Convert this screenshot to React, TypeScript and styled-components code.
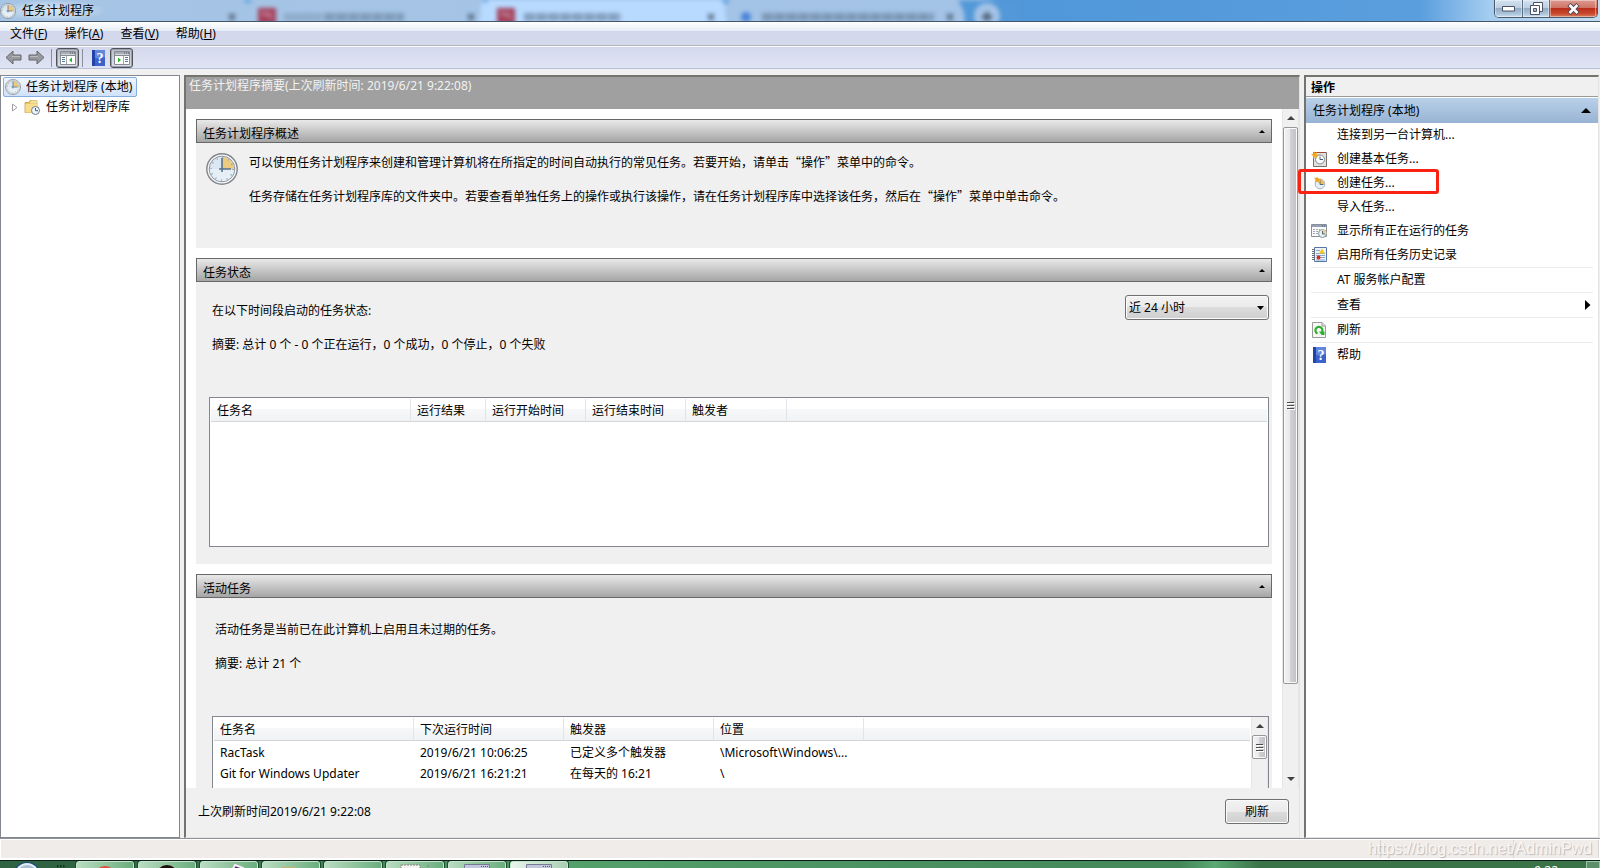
import React from "react";
import styled, { createGlobalStyle } from "styled-components";

const GlobalStyle = createGlobalStyle`
  *, *::before, *::after { box-sizing: border-box; }
  body { margin: 0; overflow: hidden; background: #f0f0f0; }
  body, button, select, table {
    font-family: "Noto Sans", "Noto Sans CJK SC", sans-serif;
    font-size: 12px;
    line-height: 16px;
    color: #000;
  }
  button { margin: 0; padding: 0; border: 0; background: none; }
  h1, h2, h3, p, ul { margin: 0; padding: 0; font-size: 12px; font-weight: 400; list-style: none; }
`;

const Screen = styled.div`
  display: flex;
  flex-direction: column;
  height: 100vh;
  overflow: hidden;
`;

/* ---------- title bar ---------- */

const TitleBar = styled.header`
  position: relative;
  display: flex;
  flex: none;
  justify-content: space-between;
  height: 22px;
  overflow: hidden;
  border-bottom: 1px solid #44546a;
  background: linear-gradient(to right, #a6c5e5 0, #a3c3e7 980px, #4f97d9 1000px, #5a9edd calc(100% - 180px), #a5cdf0 calc(100% - 110px), #c5dcf0 100%);
`;

const Backdrop = styled.svg`
  position: absolute;
  left: 0;
  top: 0;
  filter: blur(2px);
`;

const Caption = styled.div`
  position: relative;
  display: flex;
  align-items: center;
  gap: 6px;
  height: 21px;
  padding-right: 12px;
  background: radial-gradient(closest-side, rgba(255, 255, 255, 0.6), rgba(255, 255, 255, 0.3) 60%, transparent);
`;

const WindowButtons = styled.div`
  position: relative;
  display: flex;
  height: 18px;
  margin-right: 2px;
  border: 1px solid #4a5a6b;
  border-top: 0;
  border-radius: 0 0 5px 5px;
  overflow: hidden;
`;

const WindowButton = styled.button<{ $width: number; $danger?: boolean }>`
  display: flex;
  align-items: center;
  justify-content: center;
  width: ${(p) => p.$width}px;
  height: 17px;
  border-right: 1px solid ${(p) => (p.$danger ? "transparent" : "#5c6f83")};
  box-shadow: inset 0 0 0 1px rgba(255, 255, 255, 0.4);
  background: ${(p) =>
    p.$danger
      ? "linear-gradient(#dc9c92 0, #cf7466 45%, #b92f1b 50%, #c8492d 80%, #d98162 100%)"
      : "linear-gradient(#d3e2ef 0, #bcd0e2 45%, #93adc6 50%, #a9c3da 80%, #cfe2ee 100%)"};
`;

/* ---------- menu and tool bar ---------- */

const MenuBar = styled.nav`
  display: flex;
  flex: none;
  gap: 17px;
  height: 24px;
  padding-left: 10px;
  border-bottom: 1px solid #b1b3bf;
  background: linear-gradient(#fff 0, #e6edf5 9px, #d4d8ec 9px, #d4d9ed 100%);
`;

const MenuButton = styled.button`
  height: 23px;
  white-space: nowrap;
`;

const ToolBar = styled.div`
  display: flex;
  flex: none;
  align-items: center;
  height: 23px;
  padding-left: 2px;
  border-top: 1px solid #fdfdff;
  border-bottom: 1px solid #b8bfd6;
  background: linear-gradient(#d4d8ec, #dfe4f5);
`;

const ToolButton = styled.button<{ $pressed?: boolean }>`
  display: flex;
  align-items: center;
  justify-content: center;
  width: 23px;
  height: 20px;
  border-radius: 3px;
  border: ${(p) => (p.$pressed ? "1px solid #4f5358" : "0")};
  background: ${(p) => (p.$pressed ? "linear-gradient(#b9bfcd, #dde1ec)" : "none")};
  box-shadow: ${(p) => (p.$pressed ? "inset 0 0 0 1px #9aa0ad" : "none")};
`;

const ToolDivider = styled.span`
  width: 1px;
  height: 18px;
  margin: 0 4px 0 3px;
  background: #8b8f9c;
`;

/* ---------- panes ---------- */

const Workspace = styled.main`
  display: grid;
  flex: 1;
  grid-template-columns: 180px minmax(0, 1fr) 295px;
  gap: 4px;
  min-height: 0;
  padding: 6px 1px 0 0;
  border-bottom: 1px solid #8f9197;
`;

const TreePane = styled.aside`
  padding: 1px 2px;
  border: 1px solid #828790;
  background: #fff;
`;

const TreeItem = styled.button<{ $selected?: boolean; $level: number }>`
  display: flex;
  align-items: center;
  gap: ${(p) => (p.$level ? 6 : 5)}px;
  height: 20px;
  padding: 0 4px 0 ${(p) => (p.$level ? 8 : 1)}px;
  white-space: nowrap;
  border-radius: 2px;
  border: 1px solid ${(p) => (p.$selected ? "#84acdd" : "transparent")};
  background: ${(p) => (p.$selected ? "linear-gradient(#f0f6fe, #cfe2fb)" : "none")};
`;

const SummaryPane = styled.section`
  display: flex;
  flex-direction: column;
  min-height: 0;
  border: solid;
  border-width: 2px 1px 1px 2px;
  border-color: #73736f #e3e3e3 #e3e3e3 #73736f;
  background: #f0f0f0;
`;

const SummaryTitle = styled.h1`
  flex: none;
  height: 32px;
  padding: 1px 3px;
  color: #f2f2f2;
  background: #a0a0a0;
`;

const SummaryScroll = styled.div`
  display: flex;
  flex: 1;
  min-height: 0;
  overflow: hidden;
  background: #fff;
`;

const Sections = styled.div`
  display: flex;
  flex: 1;
  flex-direction: column;
  gap: 10px;
  min-width: 0;
  padding: 10px 10px 0;
`;

const Section = styled.section<{ $height: number }>`
  flex: none;
  height: ${(p) => p.$height}px;
  background: #f0f0f0;
`;

const SectionHeader = styled.div`
  display: flex;
  align-items: center;
  justify-content: space-between;
  height: 24px;
  padding: 6px 6px 0;
  border: 1px solid #686868;
  background: linear-gradient(#e9e9e9, #a5a5a5);
`;

const CollapseButton = styled.button`
  display: flex;
  align-items: center;
  height: 16px;
  padding-bottom: 6px;
`;

const Overview = styled.div`
  display: flex;
  gap: 11px;
  padding: 10px 10px;
`;

const OverviewText = styled.div`
  display: flex;
  flex-direction: column;
  gap: 18px;
  padding-top: 1px;
  font-family: "Noto Sans CJK SC", sans-serif;
`;

const Status = styled.div`
  display: flex;
  align-items: flex-start;
  justify-content: space-between;
  height: 115px;
  padding: 13px 3px 0 16px;
`;

const StatusText = styled.div`
  display: flex;
  flex-direction: column;
  gap: 18px;
  padding-top: 8px;
`;

const ActiveText = styled(StatusText)`
  height: 118px;
  padding: 24px 19px 0;
`;

const PeriodSelect = styled.select`
  appearance: none;
  width: 144px;
  height: 25px;
  padding: 0 3px;
  border: 1px solid #707070;
  border-radius: 3px;
  box-shadow: inset 0 0 0 1px #fbfbfb;
  background: linear-gradient(#f2f2f2 0, #ebebeb 50%, #dcdcdc 50%, #cfcfcf 100%);
`;

const SelectBox = styled.div`
  position: relative;
  svg { position: absolute; right: 5px; top: 11px; pointer-events: none; }
`;

const ListFrame = styled.div<{ $height: number; $left: number }>`
  display: flex;
  height: ${(p) => p.$height}px;
  margin: 0 3px 0 ${(p) => p.$left}px;
  border: 1px solid #828790;
  background: #fff;
`;

const ListBody = styled.div`
  flex: 1;
  min-width: 0;
  padding: 1px 1px 0;
`;

const List = styled.table`
  width: 100%;
  table-layout: fixed;
  border-collapse: separate;
  border-spacing: 0;
  white-space: nowrap;
  th {
    height: 23px;
    padding: 2px 0 0 6px;
    text-align: left;
    font-weight: 400;
    border-bottom: 1px solid #d5d5d5;
    border-right: 1px solid #e1e4e8;
    background: linear-gradient(#fff 0, #fff 45%, #f7f8fa 45%, #f1f2f4 100%);
  }
  th:last-child { border-right: 0; }
  td {
    height: 21px;
    padding: 2px 0 0 6px;
    overflow: hidden;
  }
`;

const Col = styled.col<{ $width?: number }>`
  width: ${(p) => (p.$width ? `${p.$width}px` : "auto")};
`;

const Footer = styled.footer`
  display: flex;
  flex: none;
  align-items: center;
  justify-content: space-between;
  height: 49px;
  padding: 0 10px 2px 12px;
`;

const RefreshButton = styled.button`
  width: 64px;
  height: 25px;
  border: 1px solid #707070;
  border-radius: 3px;
  box-shadow: inset 0 0 0 1px #fbfbfb;
  background: linear-gradient(#f2f2f2 0, #ebebeb 50%, #dcdcdc 50%, #cfcfcf 100%);
`;

/* ---------- scroll bars ---------- */

const ScrollTrack = styled.div`
  display: flex;
  flex: none;
  flex-direction: column;
  align-items: center;
  width: 17px;
  border: solid #e6e6e6;
  border-width: 0 1px;
  background: #f0f0f0;
`;

const ScrollArrow = styled.button`
  display: flex;
  flex: none;
  align-items: center;
  justify-content: center;
  width: 15px;
  height: 18px;
`;

const ScrollThumb = styled.div<{ $size: string }>`
  display: flex;
  flex: none;
  align-items: center;
  justify-content: center;
  width: 15px;
  height: ${(p) => p.$size};
  border: 1px solid #979797;
  border-radius: 2px;
  box-shadow: inset 0 0 0 1px #fafafa;
  background: linear-gradient(to right, #f3f3f3 0, #e8e8ea 45%, #d2d2d5 50%, #bfbfc4 100%);
`;

const ScrollRest = styled.div`
  flex: 1;
`;

/* ---------- actions ---------- */

const ActionsPane = styled.aside`
  position: relative;
  border: solid;
  border-width: 2px 1px 1px 2px;
  border-color: #73736f #e3e3e3 #e3e3e3 #73736f;
  background: #fff;
`;

const ActionsTitle = styled.h2`
  height: 20px;
  padding: 3px 5px 0;
  font-weight: 700;
  border-bottom: 1px solid #9a9a9a;
  background: #f0f0f0;
`;

const ActionsGroup = styled.button`
  display: flex;
  align-items: center;
  justify-content: space-between;
  width: 100%;
  height: 26px;
  padding: 0 7px;
  border-top: 1px solid #fff;
  background: linear-gradient(#b9d0e9, #98b3d3);
`;

const ActionItem = styled.li<{ $ruled?: boolean }>`
  margin: 0 5px;
  border-bottom: ${(p) => (p.$ruled ? "1px solid #ebebeb" : "0")};
`;

const ActionButton = styled.button`
  display: flex;
  align-items: center;
  width: 100%;
  height: 24px;
  padding-right: 2px;
  text-align: left;
`;

const ActionIcon = styled.span`
  display: flex;
  flex: none;
  justify-content: center;
  width: 16px;
  margin-right: 10px;
`;

const ActionLabel = styled.span`
  flex: 1;
`;

const Highlight = styled.div`
  position: absolute;
  left: -8px;
  top: 92px;
  width: 141px;
  height: 25px;
  border: 3px solid #fb2213;
  border-radius: 3px;
  pointer-events: none;
`;

/* ---------- status bar and task bar ---------- */

const StatusBar = styled.div`
  position: relative;
  display: flex;
  flex: none;
  justify-content: flex-end;
  height: 21px;
  border: solid #fff;
  border-width: 1px 1px 2px;
  background: #f0ecea;
`;

const StatusCell = styled.span<{ $width: number }>`
  width: ${(p) => p.$width}px;
  border-left: 1px solid #d9d5d3;
`;

const Watermark = styled.span`
  position: absolute;
  right: 7px;
  top: 0;
  font: 16px/18px "Liberation Sans", Arial, sans-serif;
  color: #f8f6f5;
  text-shadow: 1px 1px 1px #b9b6b5;
`;

const TaskBar = styled.footer`
  display: flex;
  flex: none;
  gap: 4px;
  height: 8px;
  overflow: hidden;
  border-top: 1px solid #0d2018;
  background: linear-gradient(to right, #2f6341 0, #2f6341 76px, #54a06b 570px, #4a9161 900px, #448759 1180px, #5aa873 1215px, #3b7349 1260px, #3b7349 100%);
`;

const StartArea = styled.div`
  display: flex;
  flex: none;
  gap: 14px;
  width: 72px;
  padding-left: 12px;
`;

const TaskButton = styled.button<{ $active?: boolean }>`
  display: flex;
  flex: none;
  justify-content: center;
  align-items: flex-start;
  width: 58px;
  height: 12px;
  border: 1px solid #c5e5cd;
  border-radius: 3px 3px 0 0;
  box-shadow: 0 0 0 1px #1d4a2e;
  background: ${(p) =>
    p.$active
      ? "linear-gradient(to right, #eaf5ec, #a9cfb3)"
      : "linear-gradient(to right, #b9dcc1, #6aae7d)"};
`;

const Tray = styled.div`
  display: flex;
  flex: 1;
  justify-content: flex-end;
  gap: 28px;
  color: #fff;
  time { padding-top: 2px; }
`;

const ShowDesktop = styled.button`
  width: 14px;
  height: 12px;
  border: 1px solid #9cc4a7;
  background: #5d8f6c;
`;

/* ---------- drawings ---------- */

const Clock = ({ size }: { size: number }) => (
  <svg width={size} height={size} viewBox="0 0 32 32" aria-hidden="true">
    <circle cx="16" cy="16" r="15.2" fill="#f5f5f5" stroke="#80858a" strokeWidth="1.4" />
    <circle cx="16" cy="16" r="12.8" fill="#dbe8f3" stroke="#8e969f" strokeWidth="1" />
    <path d="M4 16a12 12 0 0 0 24 0Z" fill="#e6eff6" />
    <path d="M16 16V4a12 12 0 0 1 12 12Z" fill="#ecca80" />
    <circle cx="16" cy="16" r="11" fill="none" stroke="#879eb5" strokeWidth="1.6" strokeDasharray="1 4.76" />
    <path d="M16 5v14M13 16h12" stroke="#56718e" strokeWidth="1.600" fill="none" />
  </svg>
);

const FolderClock = () => (
  <svg width="16" height="16" viewBox="0 0 16 16" aria-hidden="true">
    <path d="M1 3.500h4l1-2h7v12H1Z" fill="#e8c25f" stroke="#c9a04a" strokeWidth=".8" />
    <path d="M7 1.500h6v3H6Z" fill="#f3df9d" />
    <path d="M1.500 5h12v8.500h-12Z" fill="#f7dd8c" />
    <circle cx="11.500" cy="11.500" r="4" fill="#eef5fa" stroke="#6c7f90" />
    <path d="M11.500 9v2.700H14" stroke="#40617e" fill="none" />
  </svg>
);

const Arrow = ({ flip }: { flip?: boolean }) => (
  <svg width="17" height="15" viewBox="0 0 17 15" aria-hidden="true">
    <path
      d={flip ? "M16 7.500 9 1v4H1v5h8v4Z" : "M1 7.500 8 1v4h8v5H8v4Z"}
      fill="#97999c"
      stroke="#66686c"
      strokeLinejoin="round"
    />
    <path d={flip ? "M2 6.500h8" : "M7 6.500h8"} stroke="#b9bbbf" />
  </svg>
);

const PaneIcon = ({ right }: { right?: boolean }) => (
  <svg width="16" height="14" viewBox="0 0 16 14" aria-hidden="true">
    <path d="M.5.5h15v13H.5Z" fill="#fff" stroke="#868b93" />
    <path d="M1 1h14v2.500H1Z" fill="#a9adb5" />
    <path d="M10 2h1M12 2h1M14 2h1" stroke="#4c5561" />
    <path d="M1 4.500h14" stroke="#868b93" />
    <path d={right ? "M9.500 5v8" : "M6.500 5v8"} stroke="#a4a8ae" />
    <path d={right ? "M11 6.500h3M11 8.500h3M11 10.500h3" : "M2 6.500h3M2 8.500h3M2 10.500h3"} stroke="#54789e" />
    <path d={right ? "M4 6.500v5l3-2.500Z" : "M12 6.500v5L9 9Z"} fill="#27b52a" />
  </svg>
);

const HelpIcon = () => (
  <svg width="13" height="16" viewBox="0 0 13 16" aria-hidden="true">
    <path d="M0 0h13v16H0Z" fill="#3c63cb" />
    <path d="M0 0h3v16H0Z" fill="#2443a6" />
    <path d="M3 0h10v7Q7 9 3 8Z" fill="#6286dc" />
    <text x="8" y="13" textAnchor="middle" fontFamily="Liberation Serif, serif" fontWeight="700" fontSize="14" fill="#fff">
      ?
    </text>
  </svg>
);

const Star = () => (
  <path d="m3 0 1 2 2-1-.5 2L8 4 5.500 5 6 7.500 4 6 2 7.500 2.200 5 0 3.500l2.500-.8Z" fill="#f5a81c" />
);

const BasicTaskIcon = () => (
  <svg width="16" height="16" viewBox="0 0 16 16" aria-hidden="true">
    <path d="M2.500 1.500h13v14h-13Z" fill="#e3e1dd" stroke="#77726e" />
    <path d="M3 1.500h12" stroke="#a1483b" />
    <circle cx="9" cy="8.500" r="4.500" fill="#fbfdff" stroke="#7d8791" />
    <path d="M9 5.500v3h3" stroke="#475c70" fill="none" />
    <Star />
  </svg>
);

const TaskIcon = () => (
  <svg width="13" height="14" viewBox="0 0 13 14" aria-hidden="true">
    <circle cx="7" cy="8" r="4.800" fill="#e7f0f5" stroke="#a4b4bd" />
    <path d="M7 8V3.500A4.500 4.500 0 0 1 11.500 8Z" fill="#efbf59" />
    <path d="M7 4.500V8.500h3.500" stroke="#516b7d" fill="none" />
    <path d="M1 1.500 3 2l1-1 1.500 1.500 3 .5L6 4.500 5.500 7 4 5.500 2 7l.5-3Z" fill="#f0a227" />
  </svg>
);

const RunningIcon = () => (
  <svg width="16" height="14" viewBox="0 0 16 14" aria-hidden="true">
    <path d="M.5.5h15v12H.5Z" fill="#fafafa" stroke="#8a9099" />
    <path d="M1 1h14v2H1Z" fill="#94a1b5" />
    <path d="M11 2h1M13 2h1" stroke="#3f5878" />
    <path d="M2 5.500h7M2 7.500h5M2 9.500h5" stroke="#a3a8ae" strokeDasharray="2 1" />
    <circle cx="11.500" cy="9.500" r="4" fill="#e9f2f2" stroke="#7f9498" />
    <path d="M11.500 9.500v-4a4 4 0 0 1 4 4Z" fill="#eed08a" />
    <path d="M11.500 7v3H14" stroke="#4c6577" fill="none" />
  </svg>
);

const HistoryIcon = () => (
  <svg width="15" height="16" viewBox="0 0 15 16" aria-hidden="true">
    <path d="M2.500.5h12v14h-12Z" fill="#eef3fb" stroke="#5576a6" />
    <path d="M4 3.500h4M4 6.500h9M4 8.500h9M7 10.500h6M4 13h9" stroke="#8aa5cd" />
    <path d="M0 2.500h3M0 4.500h3M0 6.500h3M0 8.500h3M0 10.500h3M0 12.500h3" stroke="#6b6f75" />
    <path d="m10 1.500 3 5H7Z" fill="#f7c916" />
    <circle cx="6.500" cy="10.500" r="2" fill="#d22c25" />
  </svg>
);

const RefreshIcon = () => (
  <svg width="14" height="16" viewBox="0 0 14 16" aria-hidden="true">
    <path d="M.5.5h9.500l3.500 3.500v11.500H.5Z" fill="#f7f7f7" stroke="#9b9b9b" />
    <path d="M10 .5V4h3.500" fill="#ddd" stroke="#9b9b9b" />
    <path d="M5.500 11.500a3.500 3.500 0 1 1 4.500-1.500" fill="none" stroke="#2fb02d" strokeWidth="2.200" />
    <path d="M7 9.500h5.500V13H9.500Z" fill="#2fb02d" />
  </svg>
);

const Triangle = ({ kind, color = "#000" }: { kind: "small" | "up" | "down" | "select" | "big" | "right"; color?: string }) => {
  const shapes = {
    small: [6, 3, "M3 0 6 3H0Z"],
    up: [8, 4, "M4 0 8 4H0Z"],
    down: [8, 4, "M0 0h8L4 4Z"],
    select: [7, 4, "M0 0h7L3.500 4Z"],
    big: [10, 5, "M5 0 10 5H0Z"],
    right: [6, 10, "M0 0 5.500 5 0 10Z"],
  } as const;
  const [w, h, d] = shapes[kind];
  return (
    <svg width={w} height={h} viewBox={`0 0 ${w} ${h}`} aria-hidden="true">
      <path d={d} fill={color} />
    </svg>
  );
};

const Grip = () => (
  <svg width="8" height="9" viewBox="0 0 8 9" aria-hidden="true">
    <path d="M0 1.500h7M0 4.500h7M0 7.500h7" stroke="#4d4d4d" />
    <path d="M1 2.500h7M1 5.500h7M1 8.500h7" stroke="#fff" />
  </svg>
);

const GlassBackdrop = () => (
  <Backdrop width="1020" height="26" viewBox="0 0 1020 26" aria-hidden="true">
    <circle cx="248" cy="-2" r="5" fill="#4da0e0" />
    <path d="M472 0h12v-4h242v4h12V-4H472Z" fill="#4f97d9" />
    <path d="M470 30Q481 28 481 8q0-12 9-12h226q9 0 9 12 0 20 10 22Z" fill="#b8daff" />
    <path d="M478-4h16l-9 7Z M717-3h16l-7 7Z" fill="#4394dc" />
    <path d="M957-3h70v33h-60q-2-3-3-18Z" fill="#5398d8" />
    <circle cx="987" cy="16" r="13" fill="#a3c3e7" />
    <path d="M982 17h10M987 12v9" stroke="#53677f" strokeWidth="4" />
    <rect x="258" y="8" width="18" height="16" fill="#a3405b" />
    <rect x="497" y="8" width="18" height="16" fill="#a3405b" />
    <path d="m262 12 4 4M268 12l3 6M501 12l4 4M507 12l3 6" stroke="#d2a4b4" strokeWidth="2" />
    <circle cx="746" cy="17" r="5" fill="#4a84d8" />
    <g stroke="#67809c" strokeWidth="8">
      <path d="M284 17h38" opacity=".35" />
      <path d="M324 17h80" strokeDasharray="11 1" opacity=".6" />
      <path d="M524 17h97" strokeDasharray="11 1" opacity=".65" />
      <path d="M762 17h172" strokeDasharray="11 1" opacity=".65" />
    </g>
    <path d="m229 14 6 6m0-6-6 6M468 14l6 6m0-6-6 6M708 14l6 6m0-6-6 6M947 14l6 6m0-6-6 6" stroke="#46586d" strokeWidth="2" />
  </Backdrop>
);

/* ---------- data ---------- */

const menus = [
  ["文件", "F"],
  ["操作", "A"],
  ["查看", "V"],
  ["帮助", "H"],
];

const actions: { label: string; icon?: React.ReactNode; ruled?: boolean; submenu?: boolean }[] = [
  { label: "连接到另一台计算机..." },
  { label: "创建基本任务...", icon: <BasicTaskIcon /> },
  { label: "创建任务...", icon: <TaskIcon /> },
  { label: "导入任务..." },
  { label: "显示所有正在运行的任务", icon: <RunningIcon /> },
  { label: "启用所有任务历史记录", icon: <HistoryIcon />, ruled: true },
  { label: "AT 服务帐户配置", ruled: true },
  { label: "查看", submenu: true, ruled: true },
  { label: "刷新", icon: <RefreshIcon />, ruled: true },
  { label: "帮助", icon: <HelpIcon /> },
];

const activeTasks = [
  ["RacTask", "2019/6/21 10:06:25", "已定义多个触发器", "\\Microsoft\\Windows\\..."],
  ["Git for Windows Updater", "2019/6/21 16:21:21", "在每天的 16:21", "\\"],
];

const WindowGlyph = () => (
  <svg width="26" height="10" viewBox="0 0 26 10" aria-hidden="true">
    <path d="M.5 2.500h25v12H.5Z" fill="#f4f4f8" stroke="#777a97" />
    <path d="M1 3h24v3H1Z" fill="#c3c7dc" />
    <path d="M17 4.500h7" stroke="#51557a" strokeDasharray="1 1" />
  </svg>
);

const taskButtons: { name: string; art: React.ReactNode }[] = [
  { name: "浏览器", art: <circle cx="15" cy="15" r="11" fill="#e0503f" /> },
  { name: "音乐", art: <circle cx="15" cy="14" r="11" fill="#1c0d0b" /> },
  { name: "开发工具", art: <path d="m21 3 8 3-5 8h-9Z" fill="#53286b" stroke="#f4eef6" strokeWidth="2" /> },
  { name: "资源管理器", art: <path d="M6 5h14v8H6Z" fill="#c9b172" /> },
  { name: "应用", art: null },
  { name: "记事本", art: <path d="M1 3h19v10H1ZM28 3v8" fill="#f5f5f5" stroke="#8d7c7c" strokeDasharray="2 1" /> },
];

interface ListTableProps {
  label: string;
  widths: number[];
  heads: string[];
  rows: string[][];
}

const ListTable = ({ label, widths, heads, rows }: ListTableProps) => (
  <ListBody>
    <List aria-label={label}>
      <colgroup>
        {widths.map((w, i) => (
          <Col key={i} $width={w} />
        ))}
        <Col />
      </colgroup>
      <thead>
        <tr>
          {heads.map((h) => (
            <th key={h}>{h}</th>
          ))}
          <th />
        </tr>
      </thead>
      <tbody>
        {rows.map((row) => (
          <tr key={row[0]}>
            {row.map((cell, i) => (
              <td key={i}>{cell}</td>
            ))}
            <td />
          </tr>
        ))}
      </tbody>
    </List>
  </ListBody>
);

const Header = ({ children }: { children: string }) => (
  <SectionHeader>
    <h2>{children}</h2>
    <CollapseButton aria-label={`折叠${children}`}>
      <Triangle kind="small" />
    </CollapseButton>
  </SectionHeader>
);

export default function App() {
  return (
    <Screen>
      <GlobalStyle />
      <TitleBar>
        <GlassBackdrop />
        <Caption>
          <Clock size={16} />
          <span>任务计划程序</span>
        </Caption>
        <WindowButtons>
          <WindowButton $width={28} aria-label="最小化">
            <svg width="13" height="6" viewBox="0 0 13 6">
              <path d="M.5.500h12v4.500H.5Z" fill="#fff" stroke="#4e5467" />
            </svg>
          </WindowButton>
          <WindowButton $width={27} aria-label="向下还原">
            <svg width="13" height="13" viewBox="0 0 13 13">
              <path d="M3.500.5h9v9h-9Z" fill="#fff" stroke="#4e5467" />
              <path d="M.5 3.500h9v9h-9Z" fill="#fff" stroke="#4e5467" />
              <path d="M3.500 6.500h3v3h-3Z" fill="#a9bed2" stroke="#4e5467" />
            </svg>
          </WindowButton>
          <WindowButton $width={47} $danger aria-label="关闭">
            <svg width="13" height="12" viewBox="0 0 13 12">
              <path d="m2 1.500 9 9m0-9-9 9" stroke="#534450" strokeWidth="4.500" />
              <path d="m2.500 2 8 8m0-8-8 8" stroke="#fff" strokeWidth="2.500" />
            </svg>
          </WindowButton>
        </WindowButtons>
      </TitleBar>

      <MenuBar>
        {menus.map(([name, key]) => (
          <MenuButton key={key}>
            {name}(<u>{key}</u>)
          </MenuButton>
        ))}
      </MenuBar>

      <ToolBar>
        <ToolButton aria-label="后退"><Arrow /></ToolButton>
        <ToolButton aria-label="前进"><Arrow flip /></ToolButton>
        <ToolDivider />
        <ToolButton $pressed aria-label="显示控制台树"><PaneIcon /></ToolButton>
        <ToolDivider />
        <ToolButton aria-label="帮助"><HelpIcon /></ToolButton>
        <ToolButton $pressed aria-label="显示操作窗格"><PaneIcon right /></ToolButton>
      </ToolBar>

      <Workspace>
        <TreePane>
          <TreeItem $selected $level={0}>
            <Clock size={16} />
            任务计划程序 (本地)
          </TreeItem>
          <TreeItem $level={1}>
            <svg width="6" height="9" viewBox="0 0 6 9" aria-hidden="true">
              <path d="M.5 1v7L5 4.500Z" fill="#fff" stroke="#a0a0a0" />
            </svg>
            <FolderClock />
            任务计划程序库
          </TreeItem>
        </TreePane>

        <SummaryPane>
          <SummaryTitle>任务计划程序摘要(上次刷新时间: 2019/6/21 9:22:08)</SummaryTitle>
          <SummaryScroll>
            <Sections>
              <Section $height={129}>
                <Header>任务计划程序概述</Header>
                <Overview>
                  <Clock size={32} />
                  <OverviewText>
                    <p>可以使用任务计划程序来创建和管理计算机将在所指定的时间自动执行的常见任务。若要开始，请单击“操作”菜单中的命令。</p>
                    <p>任务存储在任务计划程序库的文件夹中。若要查看单独任务上的操作或执行该操作，请在任务计划程序库中选择该任务，然后在“操作”菜单中单击命令。</p>
                  </OverviewText>
                </Overview>
              </Section>

              <Section $height={306}>
                <Header>任务状态</Header>
                <Status>
                  <StatusText>
                    <label htmlFor="period">在以下时间段启动的任务状态:</label>
                    <p>摘要: 总计 0 个 - 0 个正在运行，0 个成功，0 个停止，0 个失败</p>
                  </StatusText>
                  <SelectBox>
                    <PeriodSelect id="period" defaultValue="24">
                      <option value="24">近 24 小时</option>
                    </PeriodSelect>
                    <Triangle kind="select" />
                  </SelectBox>
                </Status>
                <ListFrame $height={150} $left={13}>
                  <ListTable
                    label="任务状态"
                    widths={[200, 75, 100, 100, 101]}
                    heads={["任务名", "运行结果", "运行开始时间", "运行结束时间", "触发者"]}
                    rows={[]}
                  />
                </ListFrame>
              </Section>

              <Section $height={306}>
                <Header>活动任务</Header>
                <ActiveText>
                  <p>活动任务是当前已在此计算机上启用且未过期的任务。</p>
                  <p>摘要: 总计 21 个</p>
                </ActiveText>
                <ListFrame $height={150} $left={16}>
                  <ListTable
                    label="活动任务"
                    widths={[200, 150, 150, 150]}
                    heads={["任务名", "下次运行时间", "触发器", "位置"]}
                    rows={activeTasks}
                  />
                  <ScrollTrack>
                    <ScrollArrow aria-label="列表向上滚动"><Triangle kind="up" color="#404040" /></ScrollArrow>
                    <ScrollThumb $size="24px"><Grip /></ScrollThumb>
                    <ScrollRest />
                  </ScrollTrack>
                </ListFrame>
              </Section>
            </Sections>
            <ScrollTrack>
              <ScrollArrow aria-label="向上滚动"><Triangle kind="up" color="#404040" /></ScrollArrow>
              <ScrollThumb $size="82%"><Grip /></ScrollThumb>
              <ScrollRest />
              <ScrollArrow aria-label="向下滚动"><Triangle kind="down" color="#404040" /></ScrollArrow>
            </ScrollTrack>
          </SummaryScroll>
          <Footer>
            <span>上次刷新时间2019/6/21 9:22:08</span>
            <RefreshButton>刷新</RefreshButton>
          </Footer>
        </SummaryPane>

        <ActionsPane>
          <ActionsTitle>操作</ActionsTitle>
          <ActionsGroup>
            任务计划程序 (本地)
            <Triangle kind="big" />
          </ActionsGroup>
          <ul>
            {actions.map((a) => (
              <ActionItem key={a.label} $ruled={a.ruled}>
                <ActionButton>
                  <ActionIcon>{a.icon}</ActionIcon>
                  <ActionLabel>{a.label}</ActionLabel>
                  {a.submenu && <Triangle kind="right" />}
                </ActionButton>
              </ActionItem>
            ))}
          </ul>
          <Highlight />
        </ActionsPane>
      </Workspace>

      <StatusBar>
        <StatusCell $width={133} />
        <StatusCell $width={85} />
        <StatusCell $width={1} />
        <Watermark>https://blog.csdn.net/AdminPwd</Watermark>
      </StatusBar>

      <TaskBar>
        <StartArea>
          <svg width="30" height="8" viewBox="0 0 30 8" aria-hidden="true">
            <circle cx="15" cy="16" r="14" fill="#a9bfd2" stroke="#1e4f78" strokeWidth="2" />
            <path d="M6 7q9-8 18 0" stroke="#e3edf4" strokeWidth="2" fill="none" />
          </svg>
          <svg width="10" height="8" viewBox="0 0 10 8" aria-hidden="true">
            <path d="M1 5h8M1 7.500h8" stroke="#0e2a1a" strokeWidth="1.500" strokeDasharray="1.500 1.500" />
          </svg>
        </StartArea>
        {taskButtons.map((b) => (
          <TaskButton key={b.name} aria-label={b.name}>
            <svg width="30" height="10" viewBox="0 0 30 10" aria-hidden="true">{b.art}</svg>
          </TaskButton>
        ))}
        <TaskButton aria-label="计算机管理"><WindowGlyph /></TaskButton>
        <TaskButton $active aria-label="任务计划程序"><WindowGlyph /></TaskButton>
        <Tray>
          <time>9:22</time>
          <ShowDesktop aria-label="显示桌面" />
        </Tray>
      </TaskBar>
    </Screen>
  );
}
